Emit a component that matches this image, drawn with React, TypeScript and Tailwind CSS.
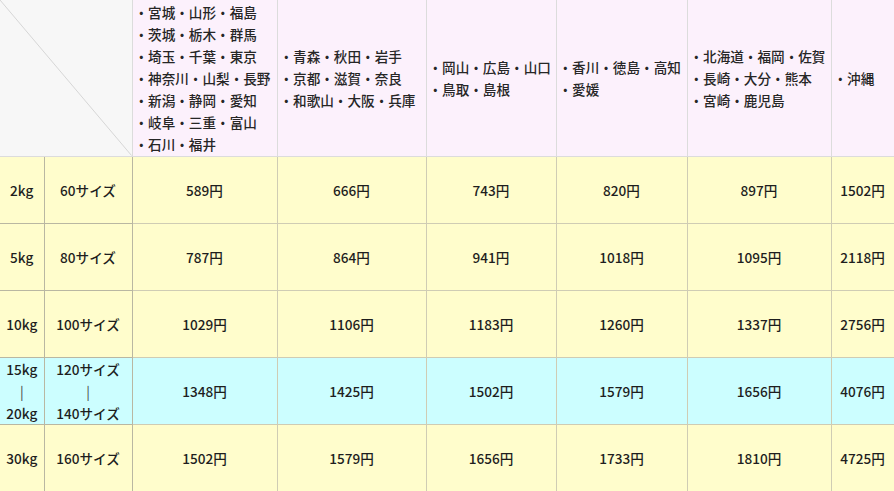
import React from 'react'

const AREAS = [
  ['・宮城・山形・福島', '・茨城・栃木・群馬', '・埼玉・千葉・東京', '・神奈川・山梨・長野', '・新潟・静岡・愛知', '・岐阜・三重・富山', '・石川・福井'],
  ['・青森・秋田・岩手', '・京都・滋賀・奈良', '・和歌山・大阪・兵庫'],
  ['・岡山・広島・山口', '・鳥取・島根'],
  ['・香川・徳島・高知', '・愛媛'],
  ['・北海道・福岡・佐賀', '・長崎・大分・熊本', '・宮崎・鹿児島'],
  ['・沖縄'],
]

const ROWS = [
  { weight: ['2kg'], size: ['60サイズ'], prices: [589, 666, 743, 820, 897, 1502] },
  { weight: ['5kg'], size: ['80サイズ'], prices: [787, 864, 941, 1018, 1095, 2118] },
  { weight: ['10kg'], size: ['100サイズ'], prices: [1029, 1106, 1183, 1260, 1337, 2756] },
  {
    weight: ['15kg', '|', '20kg'],
    size: ['120サイズ', '|', '140サイズ'],
    prices: [1348, 1425, 1502, 1579, 1656, 4076],
    highlight: true,
  },
  { weight: ['30kg'], size: ['160サイズ'], prices: [1502, 1579, 1656, 1733, 1810, 4725] },
]

const WIDTHS = [44, 88, 145, 149, 130, 131, 144, 63]

export default function App() {
  return (
    <div className="w-[894px] h-[491px] overflow-hidden bg-white font-['Noto_Sans_CJK_JP','Noto_Sans',sans-serif] text-[13.6px] leading-[22px] font-medium text-[#1e1e1e]">
      <table className="table-fixed border-collapse w-[894px]">
        <colgroup>
          {WIDTHS.map((w, i) => (
            <col key={i} style={{ width: w }} />
          ))}
        </colgroup>
        <thead>
          <tr className="h-[156px] bg-[#fcf1fc]">
            {/* corner cell with diagonal */}
            <th colSpan={2} className="relative p-0 bg-[#f7f7f7] border-r border-b border-[#dcdcdc]">
              <svg
                className="absolute inset-0 h-full w-full"
                viewBox="0 0 100 100"
                preserveAspectRatio="none"
              >
                <line x1="0" y1="0" x2="100" y2="100" stroke="#d6d6d6" strokeWidth="1" vectorEffect="non-scaling-stroke" />
              </svg>
            </th>
            {AREAS.map((lines, i) => (
              <th
                key={i}
                className="px-0.5 p-0 text-left align-middle font-medium text-[#262626] border-r border-b border-[#dcdcdc]"
              >
                {lines.map((l) => (
                  <div key={l} className="whitespace-nowrap">
                    {l}
                  </div>
                ))}
              </th>
            ))}
          </tr>
        </thead>
        <tbody>
          {ROWS.map((row, i) => (
            <tr
              key={i}
              className={`h-[67px] ${row.highlight ? 'bg-[#ccfeff]' : 'bg-[#fffdcc]'}`}
            >
              <td className="p-0 text-center align-middle border border-l-0 border-[#b9b7a2]">
                {row.weight.map((t, j) => (
                  <div key={j} className={t === '|' ? 'font-normal text-[#444]' : ''}>{t}</div>
                ))}
              </td>
              <td className="p-0 text-center align-middle border border-[#b9b7a2]">
                {row.size.map((t, j) => (
                  <div key={j} className={t === '|' ? 'font-normal text-[#444]' : ''}>{t}</div>
                ))}
              </td>
              {row.prices.map((p, j) => (
                <td
                  key={j}
                  className="p-0 text-center align-middle border border-[#cfccb4]"
                >
                  {p}円
                </td>
              ))}
            </tr>
          ))}
        </tbody>
      </table>
    </div>
  )
}
